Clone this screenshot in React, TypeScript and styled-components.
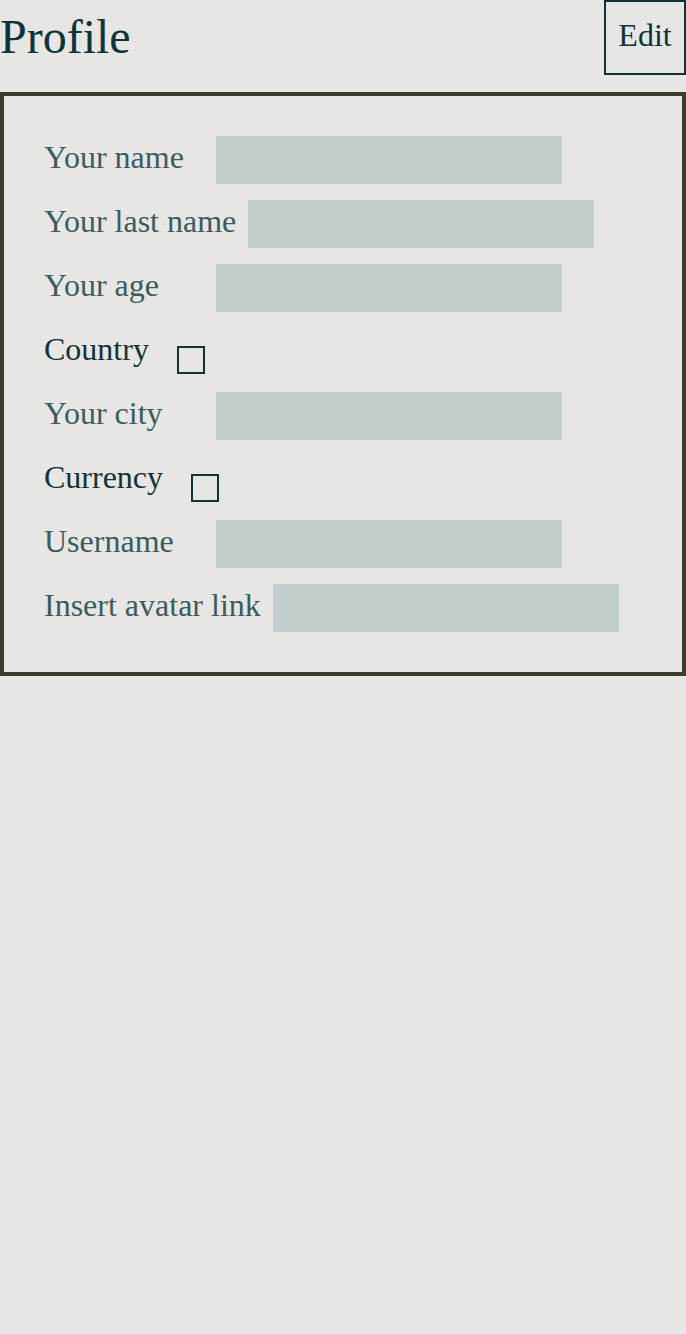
import React from 'react'
import styled, { createGlobalStyle } from 'styled-components'

const GlobalStyle = createGlobalStyle`
  html, body {
    margin: 0;
    padding: 0;
    background: #e8e6e4;
  }
  body {
    font-family: 'Liberation Serif', 'Times New Roman', serif;
    min-height: 1334px;
  }
`

type Field = {
  label: string
  kind: 'text' | 'check'
}

const fields: Field[] = [
  { label: 'Your name', kind: 'text' },
  { label: 'Your last name', kind: 'text' },
  { label: 'Your age', kind: 'text' },
  { label: 'Country', kind: 'check' },
  { label: 'Your city', kind: 'text' },
  { label: 'Currency', kind: 'check' },
  { label: 'Username', kind: 'text' },
  { label: 'Insert avatar link', kind: 'text' }
]

const Page = styled.div`
  display: flex;
  flex-direction: column;
  width: 686px;
`

const Header = styled.header`
  display: flex;
  align-items: flex-start;
  justify-content: space-between;
  padding-bottom: 17px;
`

const Title = styled.h1`
  margin: 9px 0 0;
  font-size: 48px;
  font-weight: 400;
  line-height: normal;
  color: #0d3437;
`

const EditButton = styled.button`
  box-sizing: border-box;
  width: 82px;
  height: 75px;
  padding: 0 0 5px;
  border: 2px solid #0d3437;
  background: transparent;
  font-family: 'Liberation Serif', 'Times New Roman', serif;
  font-size: 32px;
  color: #0d3437;
  cursor: pointer;
`

const ProfileCard = styled.form`
  display: flex;
  flex-direction: column;
  gap: 16px;
  padding: 40px;
  border: 4px solid #3f3a30;
`

const Row = styled.div<{ $check?: boolean }>`
  display: flex;
  align-items: flex-start;
  gap: ${({ $check }) => ($check ? '28px' : '12px')};
  height: 48px;
`

const Label = styled.label<{ $strong?: boolean }>`
  min-width: ${({ $strong }) => ($strong ? '0' : '160px')};
  font-size: 32px;
  line-height: 42px;
  color: ${({ $strong }) => ($strong ? '#0d3437' : '#3b5c5c')};
  white-space: nowrap;
`

const TextInput = styled.input`
  box-sizing: border-box;
  width: 346px;
  height: 48px;
  margin: 0;
  border: none;
  background: #c2cdcd;
  font-family: 'Liberation Serif', 'Times New Roman', serif;
  font-size: 24px;
  outline: none;
`

const Checkbox = styled.input`
  appearance: none;
  box-sizing: border-box;
  width: 28px;
  height: 28px;
  margin: 18px 0 0;
  border: 2px solid #0d3437;
  border-radius: 0;
  background: transparent;
`

export default function App() {
  return (
    <Page>
      <GlobalStyle />
      <Header>
        <Title>Profile</Title>
        <EditButton type='button'>Edit</EditButton>
      </Header>

      <ProfileCard>
        {fields.map(field =>
          field.kind === 'text' ? (
            <Row key={field.label}>
              <Label>{field.label}</Label>
              <TextInput type='text' />
            </Row>
          ) : (
            <Row key={field.label} $check>
              <Label $strong>{field.label}</Label>
              <Checkbox type='checkbox' />
            </Row>
          )
        )}
      </ProfileCard>
    </Page>
  )
}
